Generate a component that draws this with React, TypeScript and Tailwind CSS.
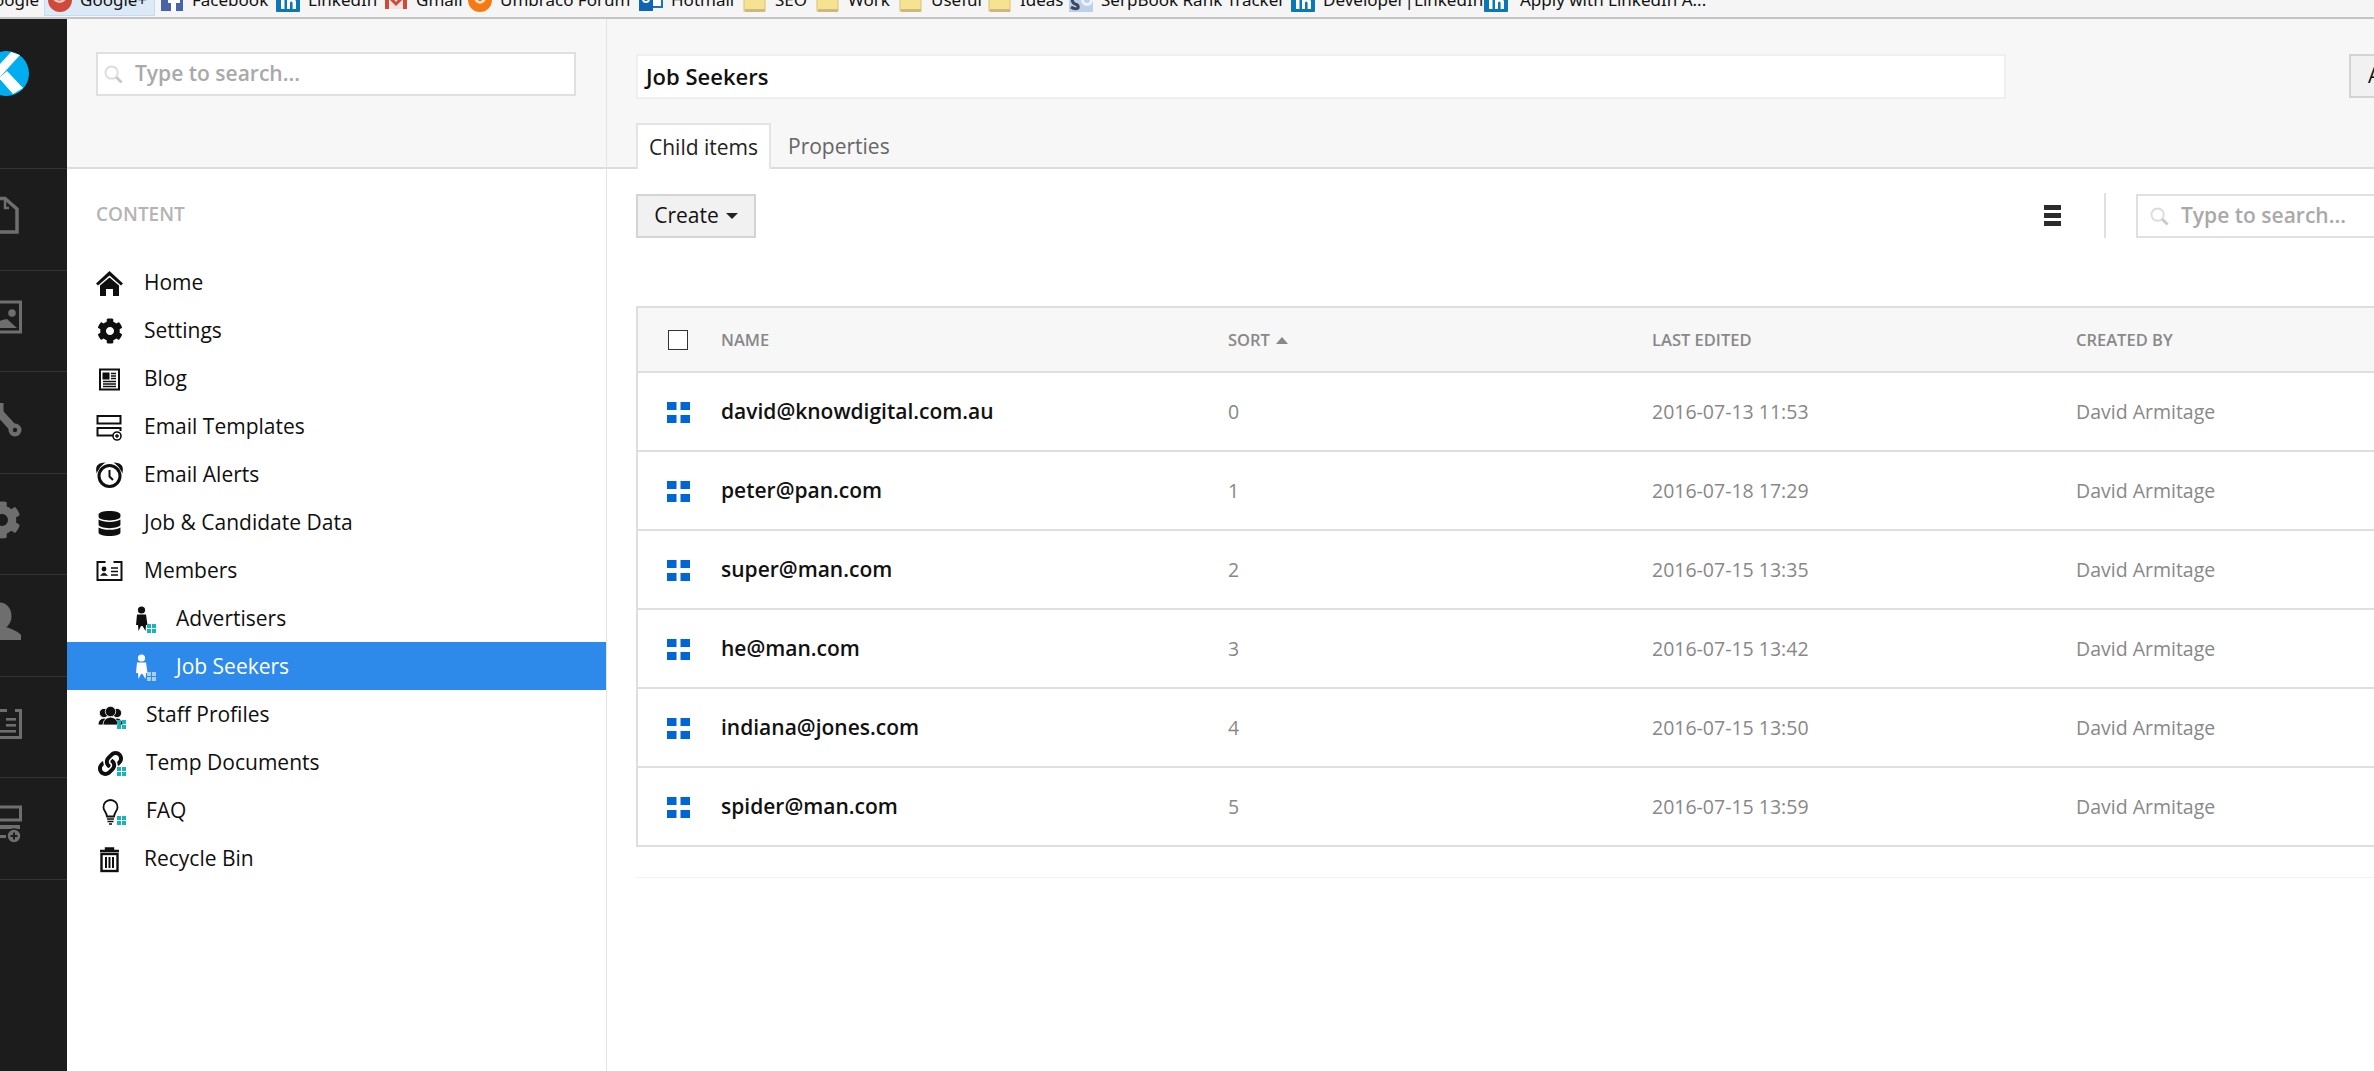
import type { ReactNode } from "react";
import { FaCog, FaDatabase, FaLink } from "react-icons/fa";

// bookmark icons are cut off by the window edge, so y=0 in these viewBoxes is the top of the page
const Folder = () => (
  <svg viewBox="0 -12 24 24" className="size-full">
    <rect x="1" y="-12" width="21" height="23" fill="#f6e392" stroke="#d8c273" strokeWidth="1" />
    <rect x="2" y="9" width="20" height="3" fill="#cdb87f" />
  </svg>
);

const LinkedInIcon = () => (
  <svg viewBox="0 -12 24 24" className="size-full">
    <rect width="24" height="24" y="-12" rx="1" fill="#0b77b5" />
    <rect x="5" y="-1" width="3.5" height="10" fill="#fff" />
    <path d="M11 -1 h3 v1.5 q1 -1.7 3 -1.7 q3 0 3 3.7 V9 h-3.4 V3 q0 -1.5 -1.3 -1.5 q-1.3 0 -1.3 1.5 V9 H11 Z" fill="#fff" />
  </svg>
);

const bookmarks: { label: string; width: string; icon: ReactNode; active?: boolean }[] = [
  {
    label: "Google+",
    width: "w-[112px]",
    active: true,
    icon: (
      <svg viewBox="0 -12 24 24" className="size-full">
        <circle cx="12" cy="0" r="12" fill="#cf4a3c" />
        <path d="M6 -1 q6 6 12 -1" fill="none" stroke="#f2c4bd" strokeWidth="2.5" />
      </svg>
    ),
  },
  {
    label: "Facebook",
    width: "w-[116px]",
    icon: (
      <svg viewBox="0 -12 24 24" className="size-full">
        <rect width="22" height="23" x="1" y="-12" fill="#4a62a8" />
        <path d="M11 11 V3 H8 V-1 H11 V-12 H16 V-1 H20 V3 H16 V11 Z" fill="#fff" />
      </svg>
    ),
  },
  { label: "LinkedIn", width: "w-[108px]", icon: <LinkedInIcon /> },
  {
    label: "Gmail",
    width: "w-[84px]",
    icon: (
      <svg viewBox="0 -12 24 24" className="size-full">
        <rect x="1" y="-12" width="22" height="21" fill="#f0e4e2" />
        <path d="M1 -12 H5 V9 H1 Z M19 -12 H23 V9 H19 Z M5 -6 L12 2 L19 -6 V-1 L12 6 L5 -1 Z" fill="#d0493b" />
      </svg>
    ),
  },
  {
    label: "Umbraco Forum",
    width: "w-[171px]",
    icon: (
      <svg viewBox="0 -12 24 24" className="size-full">
        <circle cx="12" cy="0" r="12" fill="#f57a14" />
        <path d="M6 -3 q6 11 12 0" fill="none" stroke="#fde6d0" strokeWidth="2.5" />
      </svg>
    ),
  },
  {
    label: "Hotmail",
    width: "w-[104px]",
    icon: (
      <svg viewBox="0 -12 24 24" className="size-full">
        <rect x="9" y="-12" width="14" height="19" fill="#fff" stroke="#1572c4" strokeWidth="2" />
        <rect y="-12" width="14" height="23" fill="#0f64b4" />
        <circle cx="7" cy="-1" r="3" fill="none" stroke="#fff" strokeWidth="2" />
      </svg>
    ),
  },
  { label: "SEO", width: "w-[73px]", icon: <Folder /> },
  { label: "Work", width: "w-[83px]", icon: <Folder /> },
  { label: "Useful", width: "w-[89px]", icon: <Folder /> },
  { label: "Ideas", width: "w-[81px]", icon: <Folder /> },
  {
    label: "SerpBook Rank Tracker",
    width: "w-[222px]",
    icon: (
      <svg viewBox="0 -12 24 24" className="size-full">
        <rect width="24" height="24" y="-12" fill="#bcd0ea" />
        <path d="M2 7 q4 3 7 1 q1 -3 -3 -4 q-4 -2 -2 -6" fill="none" stroke="#3c4660" strokeWidth="3" />
        <circle cx="18" cy="0" r="4.5" fill="none" stroke="#eef3fa" strokeWidth="3" />
      </svg>
    ),
  },
  { label: "Developer|LinkedIn", width: "w-[193px]", icon: <LinkedInIcon /> },
  { label: "Apply with LinkedIn A...", width: "w-[240px] gap-[12px]", icon: <LinkedInIcon /> },
];

const SearchGlass = () => (
  <svg viewBox="0 0 20 20" className="size-[19px] shrink-0" fill="none">
    <circle cx="8" cy="8" r="6.5" stroke="#dcdcdc" strokeWidth="2" />
    <path d="M13 13 L18.5 18.5" stroke="#c8c8c8" strokeWidth="3" />
  </svg>
);

const RailDoc = () => (
  <svg viewBox="0 0 40 40" className="size-10" fill="none" stroke="#6e6e6e" strokeWidth="3.5">
    <path d="M8 2.5 H23 L35 13 V36 H8 Z" />
    <path d="M23 4 V12 H27" strokeWidth="2.5" />
  </svg>
);

const RailImage = () => (
  <svg viewBox="0 0 40 40" className="size-10" fill="none">
    <rect x="2" y="4" width="36.5" height="30" stroke="#6e6e6e" strokeWidth="3" />
    <circle cx="30" cy="15" r="3.8" fill="#6e6e6e" />
    <path d="M4 30 L20 22 L25 21 L35 30 Z" fill="#6e6e6e" />
  </svg>
);

const RailWrench = () => (
  <svg viewBox="0 0 40 40" className="size-10" fill="none">
    <path d="M14 10 L33 31" stroke="#6e6e6e" strokeWidth="8" strokeLinecap="round" />
    <rect x="17" y="4" width="4.5" height="11" fill="#6e6e6e" />
    <circle cx="33" cy="31" r="6.5" fill="#6e6e6e" />
    <circle cx="33" cy="31" r="2.2" fill="#1c1c1c" />
  </svg>
);

const RailUser = () => (
  <svg viewBox="0 0 40 40" className="size-10" fill="#6e6e6e">
    <ellipse cx="18" cy="14" rx="11.5" ry="13.5" />
    <path d="M-3 38 V33 Q2 29 12 25 H24 Q36 29 39 33 V38 Z" />
  </svg>
);

const RailCard = () => (
  <svg viewBox="0 0 40 40" className="size-10" fill="none">
    <rect x="2" y="6.5" width="36.5" height="27" stroke="#6e6e6e" strokeWidth="3" />
    <rect x="25" y="4" width="8" height="5" fill="#1c1c1c" />
    <rect x="24" y="14" width="10" height="2.6" fill="#6e6e6e" />
    <rect x="24" y="20" width="10" height="2.6" fill="#6e6e6e" />
    <rect x="14" y="26" width="20" height="2.6" fill="#6e6e6e" />
    <circle cx="14" cy="18" r="4" fill="#6e6e6e" />
  </svg>
);

const RailLayout = () => (
  <svg viewBox="0 0 40 40" className="size-10" fill="none">
    <rect x="2" y="2" width="36.5" height="13" stroke="#6e6e6e" strokeWidth="3" />
    <path d="M2 20 H38 V24 H2 Z M2 30 H24 V33 H2 Z" fill="#6e6e6e" />
    <circle cx="32" cy="31" r="7" fill="#6e6e6e" stroke="#1c1c1c" strokeWidth="1.5" />
    <path d="M28.5 31 H35.5 M32 27.5 V34.5" stroke="#1c1c1c" strokeWidth="2" />
  </svg>
);

const railItems = [
  <RailDoc />,
  <RailImage />,
  <RailWrench />,
  <FaCog size={38} className="ml-[1px] text-[#6e6e6e]" />,
  <RailUser />,
  <RailCard />,
  <RailLayout />,
];

const Dots = ({ light, sub }: { light?: boolean; sub?: boolean }) => (
  <svg
    viewBox="0 0 9 9"
    className={`absolute bottom-0 size-[9px] ${sub ? "-right-[7px]" : "-right-[2px]"}`}
    fill={light ? "#a8cff5" : "#18b4bc"}
  >
    <rect width="4" height="4" />
    <rect x="5" width="4" height="4" />
    <rect y="5" width="4" height="4" />
    <rect x="5" y="5" width="4" height="4" />
  </svg>
);

const HomeIcon = () => (
  <svg viewBox="0 0 27 27" className="size-[27px]" fill="currentColor">
    <path d="M13.5 1 L27 13.5 L25 15.5 L13.5 5.5 L2 15.5 L0 13.5 Z" />
    <path d="M4 15.5 L13.5 7.5 L23 15.5 V26 H17 V19 H10 V26 H4 Z" />
  </svg>
);

const BlogIcon = () => (
  <svg viewBox="0 0 27 27" className="size-[27px]" fill="none" stroke="currentColor">
    <rect x="4" y="3.5" width="19" height="20" strokeWidth="2" />
    <rect x="7" y="7" width="6" height="6" fill="currentColor" strokeWidth="1" />
    <path d="M15 7.5 H20 M15 10 H20 M15 12.5 H20 M7 15.5 H20 M7 18 H20 M7 20.5 H20" strokeWidth="1.4" />
  </svg>
);

const TemplatesIcon = () => (
  <svg viewBox="0 0 27 27" className="size-[27px]" fill="none" stroke="currentColor" strokeWidth="2">
    <rect x="1.5" y="2" width="23" height="7.5" />
    <path d="M18 21.5 H1.5 V14 H24.5 V17" />
    <circle cx="21" cy="22" r="4" fill="#fff" strokeWidth="1.6" />
    <path d="M19 22 H23 M21 20 V24" strokeWidth="1.4" />
  </svg>
);

const AlarmIcon = () => (
  <svg viewBox="0 0 27 27" className="size-[27px]" fill="none" stroke="currentColor">
    <circle cx="13.5" cy="14" r="10.5" strokeWidth="3" />
    <path d="M13.5 8 V14.5 L17 18" strokeWidth="2" />
    <path d="M1 9 Q0 2 7 1.5 Q3.5 4 1 9 Z M26 9 Q27 2 20 1.5 Q23.5 4 26 9 Z" fill="currentColor" strokeWidth="1.5" />
  </svg>
);

const CardIcon = () => (
  <svg viewBox="0 0 27 27" className="size-[27px]" fill="none" stroke="currentColor">
    <rect x="1.5" y="4" width="24" height="18" strokeWidth="2" />
    <rect x="9.5" y="2" width="8" height="3" fill="#fff" stroke="none" />
    <circle cx="8" cy="11" r="2.4" fill="currentColor" stroke="none" />
    <path d="M4.5 17.5 Q8 12.5 11.5 17.5 Z" fill="currentColor" strokeWidth="0.5" />
    <path d="M15 10 H22 M15 13.5 H22 M15 17 H22" strokeWidth="1.4" />
  </svg>
);

const PersonIcon = () => (
  <svg viewBox="0 0 14 27" className="h-[27px] w-[14px]" fill="currentColor">
    <circle cx="6.5" cy="4" r="3.6" />
    <path d="M2 8.5 H11 L12.5 19 H11 L10.5 25 L7.5 20 L6 20 L3.5 25 L3 19 H1 Z" />
  </svg>
);

const StaffIcon = () => (
  <svg viewBox="0 0 27 27" className="size-[27px]" fill="currentColor" stroke="#fff" strokeWidth="0.8">
    <circle cx="7" cy="11" r="4.6" />
    <circle cx="20" cy="11" r="4.6" />
    <path d="M1 23 Q1 17 7 16 Q13 17 13 23 Z" />
    <path d="M14 23 Q14 17 20 16 Q26 17 26 23 Z" />
    <circle cx="13.5" cy="9.5" r="5.2" />
    <path d="M6 23 Q6 16 13.5 15 Q21 16 21 23 Z" />
  </svg>
);

const BulbIcon = () => (
  <svg viewBox="0 0 27 27" className="size-[27px]" fill="none" stroke="currentColor" strokeWidth="1.8">
    <path d="M13.5 2 a7 7 0 0 1 7 7.5 c0 3 -3 4.5 -3.5 9 h-7 c-.5 -4.5 -3.5 -6 -3.5 -9 a7 7 0 0 1 7 -7.5 z" />
    <path d="M10 21 H17 M10.5 23.5 H16.5 M12 26 H15" strokeWidth="1.6" />
  </svg>
);

const TrashIcon = () => (
  <svg viewBox="0 0 27 27" className="size-[27px]" fill="none" stroke="currentColor">
    <path d="M4 5 H23 M10 5 V2.5 H17 V5" strokeWidth="2.4" />
    <rect x="5.5" y="8" width="16" height="17" strokeWidth="2.4" />
    <path d="M10 11 V22 M13.5 11 V22 M17 11 V22" strokeWidth="2" />
  </svg>
);

type TreeRow = {
  label: string;
  icon: ReactNode;
  sub?: boolean;
  dots?: boolean;
  wide?: boolean;
  selected?: boolean;
};

const treeRows: TreeRow[] = [
  { label: "Home", icon: <HomeIcon /> },
  { label: "Settings", icon: <FaCog size={26} /> },
  { label: "Blog", icon: <BlogIcon /> },
  { label: "Email Templates", icon: <TemplatesIcon /> },
  { label: "Email Alerts", icon: <AlarmIcon /> },
  { label: "Job & Candidate Data", icon: <FaDatabase size={25} /> },
  { label: "Members", icon: <CardIcon /> },
  { label: "Advertisers", icon: <PersonIcon />, sub: true, dots: true },
  { label: "Job Seekers", icon: <PersonIcon />, sub: true, dots: true, selected: true },
  { label: "Staff Profiles", icon: <StaffIcon />, dots: true, wide: true },
  { label: "Temp Documents", icon: <FaLink size={25} />, dots: true, wide: true },
  { label: "FAQ", icon: <BulbIcon />, dots: true, wide: true },
  { label: "Recycle Bin", icon: <TrashIcon /> },
];

const members = [
  { name: "david@knowdigital.com.au", edited: "2016-07-13 11:53" },
  { name: "peter@pan.com", edited: "2016-07-18 17:29" },
  { name: "super@man.com", edited: "2016-07-15 13:35" },
  { name: "he@man.com", edited: "2016-07-15 13:42" },
  { name: "indiana@jones.com", edited: "2016-07-15 13:50" },
  { name: "spider@man.com", edited: "2016-07-15 13:59" },
];

const gridCols = "grid grid-cols-[83px_507px_424px_424px_1fr] items-center";

export default function App() {
  return (
    <div className="flex h-[1071px] w-[2374px] flex-col overflow-hidden bg-white font-['Open_Sans',sans-serif]">
      <div className="flex h-[19px] shrink-0 items-start overflow-hidden border-b-2 border-[#c4c4c4] bg-[#f5f5f5] font-['Noto_Sans',sans-serif] text-[17px] text-[#111]">
        <div className="-ml-[21px] -mt-[14px] w-[69px] shrink-0 pr-[9px] text-right leading-[27px] whitespace-nowrap">Google</div>
        {bookmarks.map((b) => (
          <div
            key={b.label}
            className={`relative -mt-[12px] flex h-[28px] shrink-0 items-start gap-[8px] whitespace-nowrap ${b.width}`}
          >
            {b.active && (
              <span className="absolute -left-[4px] top-0 h-[28px] w-[111px] border border-[#c4dcf2] bg-[#dceaf8]" />
            )}
            <span className="relative h-[24px] w-[24px] shrink-0">{b.icon}</span>
            <span className="relative -mt-[2px] leading-[27px]">{b.label}</span>
          </div>
        ))}
      </div>

      <div className="flex min-h-0 flex-1">
        <aside className="w-[67px] shrink-0 overflow-hidden bg-[#1c1c1c]">
          <div className="flex h-[150px] items-center border-b border-[#333] pb-[41px]">
            <svg viewBox="0 0 45 45" className="-ml-[16px] size-[45px] shrink-0">
              <circle cx="22.5" cy="22.5" r="22.5" fill="#00aeef" />
              <path d="M27 1 L36 4 L15 27 L6 24 Z" fill="#fff" />
              <path d="M15 27 L23 20 L39 37 L29 43 Z" fill="#fff" />
            </svg>
          </div>
          {railItems.map((icon, i) => (
            <div key={i} className="flex h-[101.5px] items-center border-b border-[#333] pb-[6px]">
              <div className="-ml-[18px] size-10 shrink-0">{icon}</div>
            </div>
          ))}
        </aside>

        <nav className="w-[540px] shrink-0 border-r border-[#e4e4e4]">
          <div className="h-[150px] border-b-2 border-[#dcdcdc] bg-[#f7f7f7] pl-[29px] pt-[33px]">
            <div className="flex h-[44px] w-[480px] items-center gap-[12px] border-2 border-[#e0e0e0] bg-white pl-[6px] text-[21px] font-semibold text-[#a9a9a9]">
              <SearchGlass />
              Type to search...
            </div>
          </div>
          <div className="pl-[29px] pt-[31px] text-[19px] leading-[28px] font-semibold text-[#b4b4b4]">CONTENT</div>
          <div className="mt-[30px] text-[21px] text-[#0f0f0f]">
            {treeRows.map((row) => (
              <div
                key={row.label}
                className={`flex h-[48px] items-center pt-[2px] ${row.sub ? "pl-[68px]" : row.wide ? "pl-[30px]" : "pl-[29px]"} ${row.selected ? "bg-[#2e8aea] text-white" : ""}`}
              >
                <span
                  className={`relative flex items-center justify-center ${row.sub ? "mr-[27px] w-[14px]" : row.wide ? "mr-[22px] w-[27px]" : "mr-[21px] w-[27px]"}`}
                >
                  {row.icon}
                  {row.dots && <Dots light={row.selected} sub={row.sub} />}
                </span>
                {row.label}
              </div>
            ))}
          </div>
        </nav>

        <main className="min-w-0 flex-1 overflow-hidden">
          <div className="relative h-[150px] border-b-2 border-[#dcdcdc] bg-[#f7f7f7] pl-[29px]">
            <div className="flex items-start pt-[35px]">
              <div className="flex h-[45px] w-[1370px] shrink-0 items-center border-2 border-[#efefef] bg-white pl-[8px] text-[22px] font-semibold text-[#111]">
                Job Seekers
              </div>
              <button className="ml-[343px] h-[44px] w-[90px] shrink-0 border-2 border-[#d4d4d4] bg-[#f1f1f1] pl-[17px] text-left text-[21px] text-[#111]">
                Actions
              </button>
            </div>
            <div className="absolute bottom-[-2px] left-[29px] flex h-[46px] items-center text-[21px]">
              <div className="flex h-full w-[135px] items-center justify-center border-2 border-b-0 border-[#e4e4e4] bg-white pt-[2px] text-[#222]">
                Child items
              </div>
              <div className="ml-[17px] pt-[2px] text-[#666]">Properties</div>
            </div>
          </div>

          <div className="flex h-[69px] items-end pl-[29px]">
            <button className="flex h-[44px] w-[120px] shrink-0 items-center justify-center gap-[7px] border-2 border-[#d4d4d4] bg-[#f1f1f1] text-[21px] text-[#111]">
              Create
              <span className="size-0 border-x-[6px] border-t-[6px] border-x-transparent border-t-[#222]" />
            </button>
            <div className="mb-[12px] ml-[1288px] flex w-[17px] shrink-0 flex-col gap-[3px]">
              <span className="h-[5px] bg-[#2b2b2b]" />
              <span className="h-[5px] bg-[#2b2b2b]" />
              <span className="h-[5px] bg-[#2b2b2b]" />
            </div>
            <span className="ml-[43px] h-[45px] w-[2px] shrink-0 bg-[#e0e0e0]" />
            <div className="ml-[30px] flex h-[44px] w-[320px] shrink-0 items-center gap-[12px] border-2 border-[#e0e0e0] bg-white pl-[12px] text-[21px] font-semibold text-[#a9a9a9]">
              <SearchGlass />
              Type to search...
            </div>
          </div>

          <div className="ml-[29px] mt-[68px] w-[1800px] border-l-2 border-t-2 border-[#dedede]">
            <div className={`${gridCols} h-[65px] border-b-2 border-[#dedede] bg-[#f7f7f7] pt-[1px] text-[16.5px] font-semibold text-[#888]`}>
              <span className="ml-[30px] size-[20px] border border-[#333] bg-white" />
              <span>NAME</span>
              <span className="flex items-center gap-[6px]">
                SORT
                <span className="size-0 border-x-[6px] border-b-[7px] border-x-transparent border-b-[#888]" />
              </span>
              <span>LAST EDITED</span>
              <span>CREATED BY</span>
            </div>
            {members.map((m, i) => (
              <div key={m.name} className={`${gridCols} h-[79px] border-b-2 border-[#dedede] pt-[1px] text-[19.5px] text-[#888]`}>
                <svg viewBox="0 0 23 21" className="ml-[29px] h-[21px] w-[23px] fill-[#0066d6]">
                  <rect width="9.5" height="8" />
                  <rect x="13.5" width="9.5" height="8" />
                  <rect y="13" width="9.5" height="8" />
                  <rect x="13.5" y="13" width="9.5" height="8" />
                </svg>
                <span className="text-[21px] font-semibold text-[#111]">{m.name}</span>
                <span>{i}</span>
                <span>{m.edited}</span>
                <span>David Armitage</span>
              </div>
            ))}
          </div>
          <div className="ml-[29px] mt-[30px] h-px bg-[#f3f3f3]" />
        </main>
      </div>
    </div>
  );
}
